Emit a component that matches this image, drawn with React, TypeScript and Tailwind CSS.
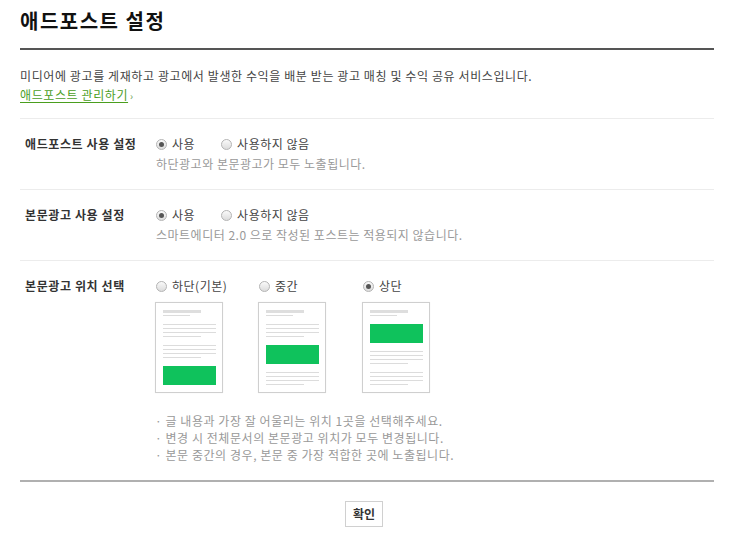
const FONT = "font-['Noto_Sans_CJK_KR','Noto_Sans',sans-serif]";

type Pos = "bottom" | "middle" | "top";

const Radio = ({ checked, label }: { checked?: boolean; label: string }) => (
  <label className="flex items-center gap-[5px] leading-4">
    <span className="flex h-[11px] w-[11px] items-center justify-center rounded-full border border-[#b4b4b4] bg-gradient-to-b from-[#fafafa] to-[#dcdcdc]">
      {checked && <span className="h-[5px] w-[5px] rounded-full bg-[#555]" />}
    </span>
    <span className="text-[12px] tracking-[0.5px] text-[#444]">{label}</span>
  </label>
);

const Lines = ({ last = 38 }: { last?: number }) => (
  <div className="flex flex-col gap-[3px]">
    <div className="h-px w-[53px] bg-[#dcdcdc]" />
    <div className="h-px w-[53px] bg-[#dcdcdc]" />
    <div className="h-px w-[53px] bg-[#dcdcdc]" />
    <div className="h-px bg-[#dcdcdc]" style={{ width: last }} />
  </div>
);

const Ad = () => <div className="h-[19px] w-[53px] bg-[#0fc25c]" />;

const Thumb = ({ pos }: { pos: Pos }) => (
  <div className="flex h-[91px] w-[68px] flex-col gap-[8px] border border-[#cfcfcf] bg-white px-[7px] pt-[7px] shadow-[0_0_1px_rgba(0,0,0,0.08)]">
    <div className="flex flex-col gap-[2px]">
      <div className="h-[3px] w-[38px] bg-[#dedede]" />
      <div className="h-px w-[27px] bg-[#dcdcdc]" />
    </div>
    {pos === "top" && <Ad />}
    <Lines />
    {pos === "middle" && <Ad />}
    <Lines />
    {pos === "bottom" && <Ad />}
  </div>
);

const Row = ({
  label,
  children,
}: {
  label: string;
  children: React.ReactNode;
}) => (
  <div className="flex border-t border-[#ececec] pt-[17px] pb-[17px]">
    <div className="w-[136px] shrink-0 pl-[5px] text-[12px] font-bold leading-4 tracking-[0.6px] text-[#333]">
      {label}
    </div>
    <div className="flex flex-col">{children}</div>
  </div>
);

export default function App() {
  const positions: { pos: Pos; label: string; w: string }[] = [
    { pos: "bottom", label: "하단(기본)", w: "w-[103px]" },
    { pos: "middle", label: "중간", w: "w-[104px]" },
    { pos: "top", label: "상단", w: "w-[104px]" },
  ];

  return (
    <div className={`min-h-[537px] bg-white ${FONT}`}>
      <div className="ml-[20px] w-[694px] pt-[7px]">
        <h1 className="text-[20px] font-bold leading-[28px] tracking-[1.5px] text-[#111]">
          애드포스트 설정
        </h1>
        <div className="mt-[13px] h-[2px] bg-[#555]" />

        <div className="mt-[16px] mb-[13px] text-[12px] leading-[19px] tracking-[0.6px]">
          <p className="text-[#444]">
            미디어에 광고를 게재하고 광고에서 발생한 수익을 배분 받는 광고 매칭 및 수익 공유 서비스입니다.
          </p>
          <p>
            <a href="#" className="text-[#4a9e1e] underline underline-offset-2">
              애드포스트 관리하기
            </a>
            <span className="ml-[2px] text-[10px] text-[#6a9e4e]">›</span>
          </p>
        </div>

        <Row label="애드포스트 사용 설정">
          <div className="flex gap-[26px]">
            <Radio checked label="사용" />
            <Radio label="사용하지 않음" />
          </div>
          <p className="mt-1 text-[12px] leading-4 tracking-[0.5px] text-[#999]">
            하단광고와 본문광고가 모두 노출됩니다.
          </p>
        </Row>

        <Row label="본문광고 사용 설정">
          <div className="flex gap-[26px]">
            <Radio checked label="사용" />
            <Radio label="사용하지 않음" />
          </div>
          <p className="mt-1 text-[12px] leading-4 tracking-[0.5px] text-[#999]">
            스마트에디터 2.0 으로 작성된 포스트는 적용되지 않습니다.
          </p>
        </Row>

        <Row label="본문광고 위치 선택">
          <div className="flex">
            {positions.map((p) => (
              <div key={p.pos} className={`${p.w} flex flex-col`}>
                <Radio checked={p.pos === "top"} label={p.label} />
                <div className="mt-[8px] -ml-px">
                  <Thumb pos={p.pos} />
                </div>
              </div>
            ))}
          </div>
          <ul className="mt-[19px] -ml-px text-[12px] leading-[17px] tracking-[0.55px] text-[#999]">
            <li>· 글 내용과 가장 잘 어울리는 위치 1곳을 선택해주세요.</li>
            <li>· 변경 시 전체문서의 본문광고 위치가 모두 변경됩니다.</li>
            <li>· 본문 중간의 경우, 본문 중 가장 적합한 곳에 노출됩니다.</li>
          </ul>
        </Row>

        <div className="h-[2px] bg-[#b0b0b0]" />

        <div className="mt-[19px] flex justify-center pr-[6px]">
          <button className="h-[26px] w-[38px] border border-[#d0d0d0] bg-white text-[12px] font-bold text-[#333]">
            확인
          </button>
        </div>
      </div>
    </div>
  );
}
